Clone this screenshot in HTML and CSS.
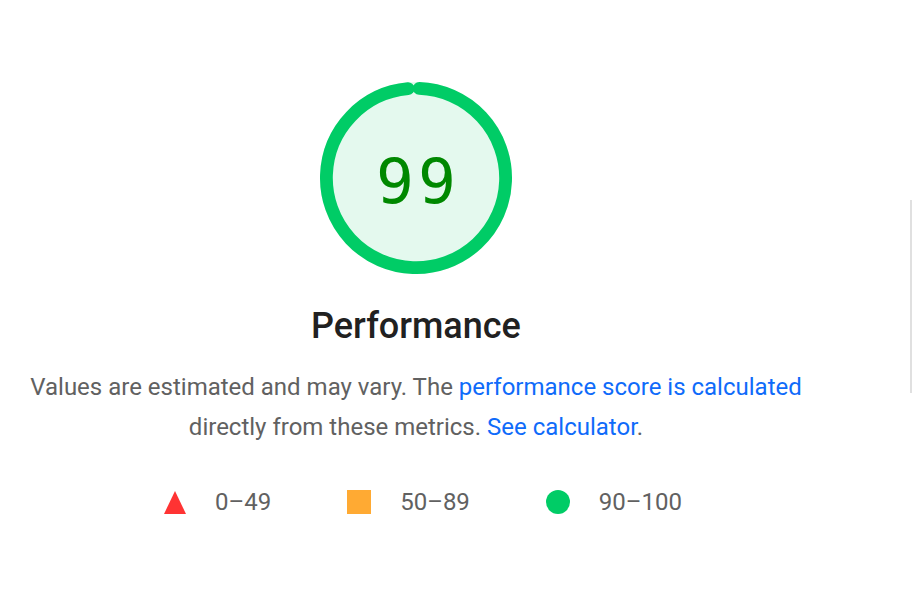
FILE: index.html
```
<!DOCTYPE html>
<html lang="en">
<head>
<meta charset="utf-8">
<title>Performance</title>
<link rel="stylesheet" href="styles.css">
</head>
<body>
<div class="page">
  <main class="summary">
    <div class="gauge">
      <svg class="gauge-svg" viewBox="0 0 120 120" width="192" height="192">
        <circle class="gauge-base" r="56" cx="60" cy="60" stroke-width="8"></circle>
        <circle class="gauge-arc" r="56" cx="60" cy="60" stroke-width="8" stroke-dasharray="344.3 351.86"></circle>
      </svg>
      <div class="gauge-percent"><span class="gauge-num">99</span></div>
    </div>
    <h1 class="title">Performance</h1>
    <p class="desc">Values are estimated and may vary. The <a href="#">performance score is calculated</a> directly from these metrics. <a href="#">See calculator</a>.</p>
    <ul class="legend">
      <li class="legend-item"><span class="shape tri"></span><span>0–49</span></li>
      <li class="legend-item"><span class="shape sq"></span><span>50–89</span></li>
      <li class="legend-item"><span class="shape dot"></span><span>90–100</span></li>
    </ul>
  </main>
  <div class="edge"></div>
</div>
</body>
</html>
```
FILE: styles.css
```
html, body {
  margin: 0;
  padding: 0;
  background: #fff;
}
body {
  font-family: Roboto, "Liberation Sans", Arial, sans-serif;
  width: 924px;
  height: 606px;
  overflow: hidden;
}
.page {
  display: flex;
  height: 606px;
}
.summary {
  width: 832px;
  display: flex;
  flex-direction: column;
  align-items: center;
  padding-top: 82px;
}
.gauge {
  position: relative;
  width: 192px;
  height: 192px;
}
.gauge-svg {
  display: block;
}
.gauge-base {
  fill: #00cc66;
  stroke: #00cc66;
  opacity: 0.1;
}
.gauge-arc {
  fill: none;
  stroke: #00cc66;
  stroke-linecap: round;
  transform-origin: 60px 60px;
  transform: rotate(-87.95deg);
}
.gauge-percent {
  position: absolute;
  inset: 0;
  display: flex;
  align-items: center;
  justify-content: center;
  padding-top: 6px;
}
.gauge-num {
  font-family: "DejaVu Sans Mono", monospace;
  font-size: 63px;
  letter-spacing: 4px;
  padding-left: 4px;
  color: #008800;
}
.title {
  margin: 32px 0 0;
  font-size: 36px;
  font-weight: 500;
  line-height: 40px;
  color: #212121;
}
.desc {
  margin: 21px 0 0;
  font-size: 24px;
  line-height: 40px;
  color: #616161;
  text-align: center;
  width: 790px;
}
.desc a {
  color: #0f6bfa;
  text-decoration: none;
}
.legend {
  list-style: none;
  margin: 41px 0 0 14px;
  padding: 0;
  display: flex;
  gap: 76px;
  font-size: 24px;
  line-height: 28px;
  color: #616161;
}
.legend-item {
  display: flex;
  align-items: center;
  gap: 29px;
}
.shape {
  display: block;
  width: 24px;
  height: 24px;
}
.tri {
  width: 0;
  height: 0;
  border-left: 11.5px solid transparent;
  border-right: 11.5px solid transparent;
  border-bottom: 23px solid #ff3333;
}
.sq {
  background: #ffaa33;
}
.dot {
  border-radius: 50%;
  background: #00cc66;
}
.edge {
  margin-top: 200px;
  margin-left: 78px;
  width: 2px;
  height: 193px;
  background: #e0e0e0;
}
```
